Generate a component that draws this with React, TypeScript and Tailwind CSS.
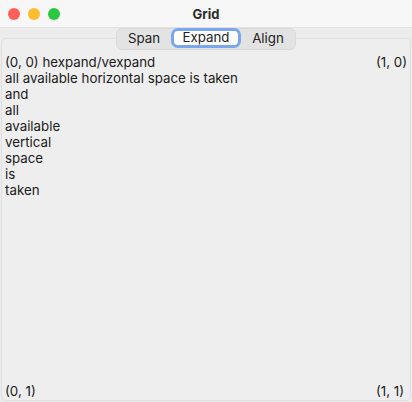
export default function App() {
  const lines = ['all available horizontal space is taken', 'and', 'all', 'available', 'vertical', 'space', 'is', 'taken'];
  return (
    <div
      className="w-[412px] h-[402px] flex flex-col overflow-hidden bg-[#ececec] text-[13.3px] leading-[16px] text-[#1a1a1a]"
      style={{ fontFamily: 'Inter, "Noto Sans", sans-serif' }}
    >
      {/* title bar */}
      <div className="relative h-[28px] shrink-0 flex items-center justify-center bg-[#f7f7f7] border-b border-[#e2e2e2]">
        <div className="absolute left-[8px] top-[8px] flex gap-[8px]">
          <span className="w-[12px] h-[12px] rounded-full bg-[#ff5f57]" />
          <span className="w-[12px] h-[12px] rounded-full bg-[#febc2e]" />
          <span className="w-[12px] h-[12px] rounded-full bg-[#28c840]" />
        </div>
        <span className="font-bold text-[13px] text-[#2a2a2a]">Grid</span>
      </div>

      <div className="flex-1 flex flex-col px-[1px] pb-[1px]">
        {/* tabs */}
        <div className="relative z-10 flex justify-center">
          <div className="flex h-[22px] rounded-[6px] bg-[#e3e3e3] border border-[#d9d9d9]">
            <button className="w-[54px] h-full text-[13.3px] leading-none text-[#222]">Span</button>
            <button className="w-[70px] h-full -my-px rounded-[7px] bg-white border-[3px] border-[#7aa7ea] text-[13.3px] leading-none text-[#222]">
              Expand
            </button>
            <button className="w-[54px] h-full text-[13.3px] leading-none text-[#222]">Align</button>
          </div>
        </div>

        {/* panel */}
        <div className="-mt-[12px] flex-1 rounded-[5px] border border-[#e0e0e0] bg-[#eeeeee] pt-[15px] px-[3px] pb-[1px] grid grid-cols-[1fr_auto] grid-rows-[1fr_auto]">
          <div className="flex flex-col">
            <span>(0, 0) hexpand/vexpand</span>
            {lines.map((l, i) => (
              <span key={i}>{l}</span>
            ))}
          </div>
          <div>(1, 0)</div>
          <div>(0, 1)</div>
          <div>(1, 1)</div>
        </div>
      </div>
    </div>
  );
}
